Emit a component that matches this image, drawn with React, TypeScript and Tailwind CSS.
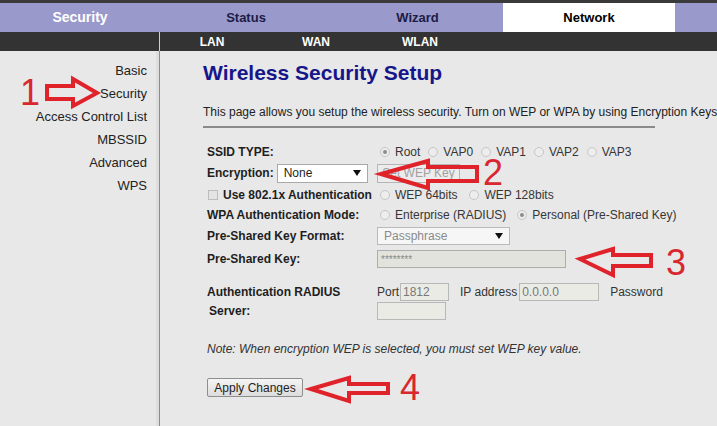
import React from "react";

function Radio({ label, checked }: { label: string; checked?: boolean }) {
  return (
    <span className="flex items-center">
      <span className="flex h-[10px] w-[10px] items-center justify-center rounded-full border border-[#c6c6c6] bg-[#ededed]">
        {checked && <span className="h-[4px] w-[4px] rounded-full bg-[#8c8c8c]" />}
      </span>
      <span className="ml-[5px] text-[#363636]">{label}</span>
    </span>
  );
}

function Caret() {
  return (
    <svg width="8" height="6" viewBox="0 0 8 6">
      <path d="M0 0H8L4 6Z" fill="#111" />
    </svg>
  );
}

export default function App() {
  const side = ["Basic", "Security", "Access Control List", "MBSSID", "Advanced", "WPS"];

  return (
    <div className="relative h-[426px] w-[717px] overflow-hidden bg-[#e8e8e8] font-['Liberation_Sans',Arial,sans-serif] text-[#1e1e1e]">
      {/* Top tabs */}
      <div className="h-[3px] bg-[#3a3a3a]" />
      <nav className="flex h-[29px] bg-[#9a99cb] font-bold">
        <div className="flex w-[160px] shrink-0 items-center justify-center text-[14px] text-white">Security</div>
        <div className="flex w-[172px] shrink-0 items-center justify-center text-[13px] text-[#1c1c45]">Status</div>
        <div className="flex w-[171px] shrink-0 items-center justify-center text-[13px] text-[#1c1c45]">Wizard</div>
        <div className="flex w-[172px] shrink-0 items-center justify-center bg-white text-[13px] text-black">Network</div>
      </nav>
      <div className="flex h-[19px] bg-[#333] text-[12px] font-bold text-white">
        <div className="w-[160px] shrink-0 border-r border-[#cfcfcf]" />
        <div className="flex w-[104px] items-center justify-center">LAN</div>
        <div className="flex w-[104px] items-center justify-center">WAN</div>
        <div className="flex w-[104px] items-center justify-center">WLAN</div>
      </div>

      <div className="flex h-[375px]">
        {/* Sidebar */}
        <aside className="flex w-[160px] shrink-0 border-r border-[#8c8c8c]">
          <div className="flex-1 pr-[9px] pt-[8px] text-right text-[13px] leading-[23px] text-[#222]">
            {side.map((s) => (
              <div key={s} className="whitespace-nowrap">{s}</div>
            ))}
          </div>
          <div className="w-[3px] bg-[#dedede]" />
        </aside>

        {/* Content */}
        <main className="min-w-0 flex-1 overflow-hidden pl-[43px] pt-[10px] text-[12px]">
          <h1 className="text-[21px] font-bold leading-[24px] text-[#16168a]">Wireless Security Setup</h1>
          <p className="mt-[20px] whitespace-nowrap leading-[14px] text-[#222]">
            This page allows you setup the wireless security. Turn on WEP or WPA by using Encryption Keys could prevent any unauthorized access to your wireless network.
          </p>
          <div className="mt-[7px] h-[2px] w-[452px] bg-[#8a8a8a]" />

          <div className="mt-[14px] pl-[4px]">
            <div className="flex h-[20px] items-center">
              <div className="w-[170px] shrink-0 font-bold">SSID TYPE:</div>
              <div className="flex gap-[8px] pl-[3px]">
                <Radio label="Root" checked />
                <Radio label="VAP0" />
                <Radio label="VAP1" />
                <Radio label="VAP2" />
                <Radio label="VAP3" />
              </div>
            </div>

            <div className="flex h-[22px] items-center">
              <div className="flex w-[170px] shrink-0 items-center">
                <span className="font-bold">Encryption:</span>
                <div className="ml-[3px] flex h-[19px] w-[91px] items-center justify-between border border-[#a9a9a9] bg-white pl-[6px] pr-[6px]">
                  <span>None</span>
                  <Caret />
                </div>
              </div>
              <div className="flex h-[19px] w-[83px] items-center justify-center border border-[#b5b5b5] bg-[#ececec] text-[#a0a0a0]">
                Set WEP Key
              </div>
            </div>

            <div className="flex h-[21px] items-center">
              <div className="flex w-[170px] shrink-0 items-center font-bold">
                <span className="ml-[1px] h-[10px] w-[10px] border border-[#bdbdbd] bg-[#e4e4e4]" />
                <span className="ml-[5px]">Use 802.1x Authentication</span>
              </div>
              <div className="flex gap-[12px] pl-[3px]">
                <Radio label="WEP 64bits" />
                <Radio label="WEP 128bits" />
              </div>
            </div>

            <div className="flex h-[19px] items-center">
              <div className="w-[170px] shrink-0 font-bold">WPA Authentication Mode:</div>
              <div className="flex gap-[11px] pl-[3px]">
                <Radio label="Enterprise (RADIUS)" />
                <Radio label="Personal (Pre-Shared Key)" checked />
              </div>
            </div>

            <div className="flex h-[23px] items-center">
              <div className="w-[170px] shrink-0 font-bold">Pre-Shared Key Format:</div>
              <div className="flex h-[18px] w-[133px] items-center justify-between border border-[#bababa] bg-[#f6f6f6] pl-[6px] pr-[6px] text-[#8a8a8a]">
                <span>Passphrase</span>
                <Caret />
              </div>
            </div>

            <div className="flex h-[24px] items-center">
              <div className="w-[170px] shrink-0 font-bold">Pre-Shared Key:</div>
              <div className="flex h-[18px] w-[189px] items-center border border-[#adadad] bg-[#e3e3dd] pl-[3px] text-[10px] text-[#888]">
                ********
              </div>
            </div>

            <div className="mt-[12px] flex">
              <div className="w-[170px] shrink-0 font-bold">
                <div className="flex h-[18px] items-center">Authentication RADIUS</div>
                <div className="flex h-[19px] items-center pl-[2px]">Server:</div>
              </div>
              <div className="text-[#333]">
                <div className="flex h-[18px] items-center">
                  <span>Port</span>
                  <div className="ml-[1px] flex h-[18px] w-[49px] items-center border border-[#b8b8b8] bg-[#ebebe6] pl-[2px] text-[#777]">1812</div>
                  <span className="ml-[11px]">IP address</span>
                  <div className="ml-[2px] flex h-[18px] w-[80px] items-center border border-[#b8b8b8] bg-[#ebebe6] pl-[2px] text-[#777]">0.0.0.0</div>
                  <span className="ml-[11px]">Password</span>
                </div>
                <div className="mt-[1px] h-[18px] w-[69px] border border-[#b8b8b8] bg-[#ebebe6]" />
              </div>
            </div>

            <p className="mt-[22px] italic leading-[14px] text-[#333]">
              Note: When encryption WEP is selected, you must set WEP key value.
            </p>

            <button className="mt-[22px] flex h-[19px] w-[96px] items-center justify-center rounded-[2px] border border-[#8e8e8e] bg-gradient-to-b from-[#f5f5f5] to-[#dcdcdc] text-[12px] text-[#1e1e1e]">
              Apply Changes
            </button>
          </div>
        </main>
      </div>

      {/* Red annotations */}
      <svg className="pointer-events-none absolute inset-0" width="717" height="426" viewBox="0 0 717 426">
        <g fill="none" stroke="#e0222b" strokeWidth="4" strokeLinejoin="miter">
          <polygon points="47,86 73,86 73,79 97,93 73,106 73,99 47,99" />
          <polygon points="381,174 428,161 428,167 477,167 477,181 428,181 428,188" />
          <polygon points="580,259 613,249 613,255 651,255 651,266 613,266 613,275" />
          <polygon points="311,389 349,378 349,384 388,384 388,393 349,393 349,401" />
        </g>
      </svg>
      <span className="absolute left-[20px] top-[75px] text-[36px] leading-none text-[#d8272f]">1</span>
      <span className="absolute left-[483px] top-[155px] text-[36px] leading-none text-[#d8272f]">2</span>
      <span className="absolute left-[666px] top-[245px] text-[36px] leading-none text-[#d8272f]">3</span>
      <span className="absolute left-[400px] top-[370px] text-[36px] leading-none text-[#d8272f]">4</span>
    </div>
  );
}
